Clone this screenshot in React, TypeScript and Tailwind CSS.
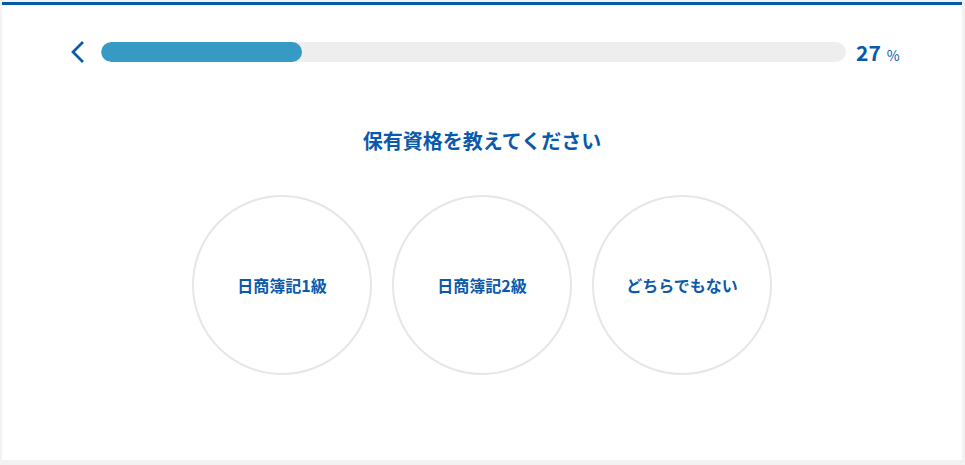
import React from "react";

const font = { fontFamily: '"Noto Sans CJK JP", "Noto Sans", sans-serif' };

export default function App() {
  const options = ["日商簿記1級", "日商簿記2級", "どちらでもない"];
  const pct = 27;
  return (
    <div className="w-[965px] h-[465px] bg-[#f2f2f2] pt-[2px] pl-[2px]" style={font}>
      <div className="w-[960px] h-[458px] bg-white border-t-[3px] border-[#005bab] flex flex-col items-center">
        <div className="w-full flex items-center h-[20px] mt-[37px] pl-[67px]">
          <button className="w-[17px] h-[22px] flex items-center justify-center text-[#0a5aab]">
            <svg width="15" height="22" viewBox="0 0 15 22" fill="none">
              <path d="M13 1 L3 11 L13 21" stroke="currentColor" strokeWidth="2.7" strokeLinecap="butt" strokeLinejoin="miter" />
            </svg>
          </button>
          <div className="ml-[15px] w-[745px] h-[20px] rounded-full bg-[#eeeeee] overflow-hidden">
            <div className="h-full rounded-full bg-[#369ac4]" style={{ width: `${pct}%` }} />
          </div>
          <div className="ml-[10px] flex items-baseline text-[#0a5aab] font-bold">
            <span className="text-[21px] leading-none">{pct}</span>
            <span className="ml-[6px] text-[14px] leading-none font-normal">%</span>
          </div>
        </div>
        <h1 className="mt-[65px] text-[20px] leading-[28px] font-bold text-[#0a5aab]">保有資格を教えてください</h1>
        <div className="mt-[40px] flex gap-[20px]">
          {options.map((o) => (
            <button
              key={o}
              className="w-[180px] h-[180px] rounded-full border-2 border-[#e6e6e6] bg-white flex items-center justify-center text-[16px] font-bold text-[#0a5aab]"
            >
              {o}
            </button>
          ))}
        </div>
      </div>
    </div>
  );
}
